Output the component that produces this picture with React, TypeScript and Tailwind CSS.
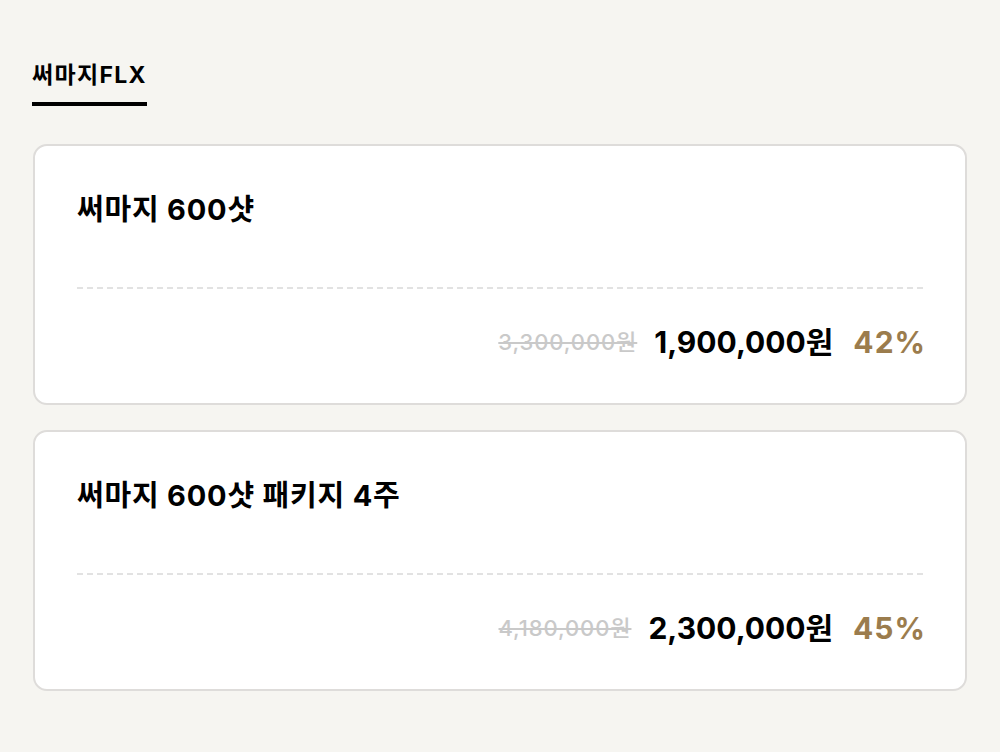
import React from "react";

interface Product {
  name: string;
  original: string;
  price: string;
  discount: string;
}

const products: Product[] = [
  { name: "써마지 600샷", original: "3,300,000원", price: "1,900,000원", discount: "42%" },
  { name: "써마지 600샷 패키지 4주", original: "4,180,000원", price: "2,300,000원", discount: "45%" },
];

const font = { fontFamily: 'Inter, "Noto Sans CJK KR", sans-serif' };

const ProductCard = ({ name, original, price, discount }: Product) => (
  <div className="h-[261px] rounded-[14px] border-2 border-[#dedcda] bg-white pl-[42px] pr-[39px] pt-[46px]">
    <div className="text-[29px] leading-[36px] font-bold tracking-[0.8px] text-black">{name}</div>
    <div className="mt-[59px] mr-[3px] border-t-2 border-dashed border-[#e2e2e2]" />
    <div className="mt-[33px] flex h-[40px] items-center justify-end">
      <span className="text-[22px] font-medium text-[#c9c9c9] line-through decoration-2 tracking-[0.9px]">{original}</span>
      <span className="ml-[17px] text-[30px] font-bold text-black">{price}</span>
      <span className="ml-[20px] text-[30px] font-bold text-[#9b7c4d] tracking-[1px]">{discount}</span>
    </div>
  </div>
);

export default function App() {
  return (
    <div className="min-h-[752px] w-full bg-[#f6f5f1] px-[33px] pt-[58px]" style={font}>
      <div className="flex">
        <div className="-ml-px border-b-4 border-black pb-[10px]">
          <span className="block text-[23px] leading-[34px] font-bold tracking-[1.3px] text-black">써마지FLX</span>
        </div>
      </div>
      <div className="mt-[38px] flex flex-col gap-[25px]">
        {products.map((p) => (
          <ProductCard key={p.name} {...p} />
        ))}
      </div>
    </div>
  );
}
